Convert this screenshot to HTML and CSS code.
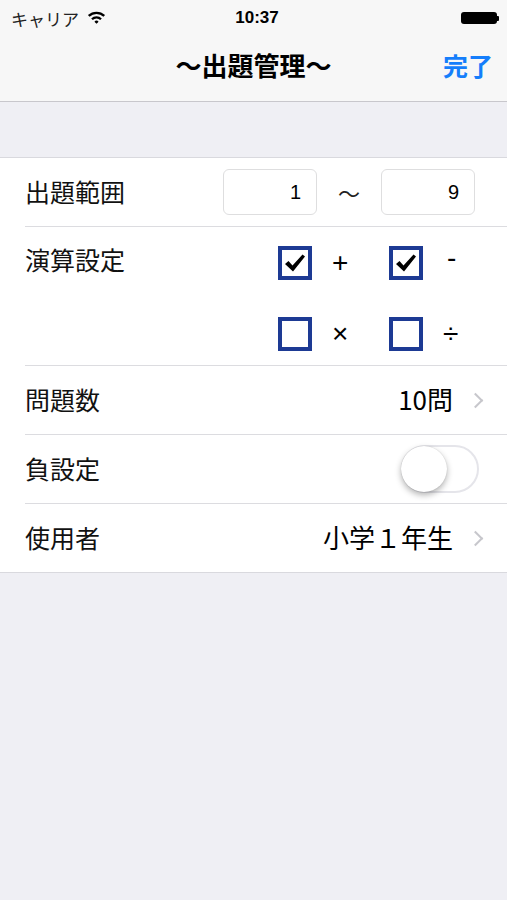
FILE: index.html
```html
<!DOCTYPE html>
<html lang="ja">
<head>
  <meta charset="UTF-8" />
  <title>出題管理</title>
  <link rel="stylesheet" href="styles.css">
</head>
<body>
  <div class="statusbar">
    <div class="carrier">キャリア
      <svg class="wifi" width="19" height="14" viewBox="0 0 20 14">
        <path d="M1 5 A13 13 0 0 1 19 5 L17.3 6.8 A10.6 10.6 0 0 0 2.7 6.8 Z" fill="#000"/>
        <path d="M4.4 8.5 A8 8 0 0 1 15.6 8.5 L13.9 10.2 A5.6 5.6 0 0 0 6.1 10.2 Z" fill="#000"/>
        <path d="M7.8 11.9 A3 3 0 0 1 12.2 11.9 L10 14 Z" fill="#000"/>
      </svg>
    </div>
    <div class="time">10:37</div>
    <div class="battery"><span class="battery-body"></span><span class="battery-tip"></span></div>
  </div>

  <div class="navbar">
    <div class="nav-title">〜出題管理〜</div>
    <div class="nav-done">完了</div>
  </div>

  <div class="spacer"></div>

  <div class="table">
    <div class="row">
      <div class="label">出題範囲</div>
      <div class="range">
        <div class="field">1</div>
        <span class="tilde">〜</span>
        <div class="field">9</div>
      </div>
    </div>

    <div class="row row-ops">
      <div class="label">演算設定</div>
      <div class="ops">
        <div class="op">
          <span class="check">
            <svg width="22" height="20" viewBox="0 0 22 20"><path d="M1 11 L4.5 8 L8.5 12.5 L18.5 1.5 L21 3.5 L9 18.5 Z" fill="#000"/></svg>
          </span>
          <span class="sign">+</span>
        </div>
        <div class="op">
          <span class="check">
            <svg width="22" height="20" viewBox="0 0 22 20"><path d="M1 11 L4.5 8 L8.5 12.5 L18.5 1.5 L21 3.5 L9 18.5 Z" fill="#000"/></svg>
          </span>
          <span class="sign sign-minus">-</span>
        </div>
        <div class="op"><span class="check"></span><span class="sign">×</span></div>
        <div class="op"><span class="check"></span><span class="sign">÷</span></div>
      </div>
    </div>

    <div class="row">
      <div class="label">問題数</div>
      <div class="value">10問<span class="chevron"></span></div>
    </div>

    <div class="row">
      <div class="label">負設定</div>
      <div class="switch"><span class="knob"></span></div>
    </div>

    <div class="row last">
      <div class="label">使用者</div>
      <div class="value">小学１年生<span class="chevron"></span></div>
    </div>
  </div>
</body>
</html>
```

FILE: styles.css
```css
body {
  margin: 0;
  background: #efeff4;
  font-family: "Noto Sans CJK JP", "Noto Sans", sans-serif;
  color: #000;
  height: 900px;
}
.statusbar {
  background: #f7f7f7;
  height: 36px;
  display: flex;
  align-items: center;
  justify-content: space-between;
  padding: 0 8px 0 11px;
  font-size: 17px;
}
.carrier {
  display: flex;
  align-items: center;
  gap: 8px;
  width: 120px;
  color: #222;
}
.wifi {
  margin-top: -2px;
}
.time {
  font-family: "Liberation Sans", sans-serif;
  font-weight: bold;
  font-size: 17px;
  margin-left: 4px;
}
.battery {
  width: 120px;
  display: flex;
  justify-content: flex-end;
  align-items: center;
}
.battery-body {
  width: 36px;
  height: 12px;
  background: #000;
  border-radius: 3px;
}
.battery-tip {
  width: 2px;
  height: 5px;
  background: #000;
  border-radius: 0 1px 1px 0;
}
.navbar {
  background: #f7f7f7;
  height: 65px;
  border-bottom: 1px solid #c8c7cc;
  display: flex;
  align-items: center;
  justify-content: center;
  position: relative;
}
.nav-title {
  font-size: 26px;
  font-weight: bold;
  margin-top: -8px;
}
.nav-done {
  position: absolute;
  right: 14px;
  top: 11px;
  font-size: 25px;
  font-weight: bold;
  color: #157efb;
}
.spacer {
  height: 55px;
}
.table {
  background: #fff;
  border-top: 1px solid #d9d9de;
  border-bottom: 1px solid #d9d9de;
  padding-left: 25px;
}
.row {
  display: flex;
  justify-content: space-between;
  align-items: center;
  height: 68px;
  border-bottom: 1px solid #dcdce0;
  padding-right: 30px;
}
.row.last {
  border-bottom: none;
}
.label {
  font-size: 25px;
  color: #111;
  margin-top: -3px;
}
.range {
  display: flex;
  align-items: center;
  margin-right: 2px;
}
.field {
  width: 94px;
  height: 46px;
  box-sizing: border-box;
  border: 1px solid #dededf;
  border-radius: 6px;
  font-family: "Liberation Sans", sans-serif;
  font-size: 20px;
  text-align: right;
  padding-right: 15px;
  line-height: 44px;
}
.tilde {
  width: 64px;
  text-align: center;
  font-size: 22px;
  color: #222;
}
.row-ops {
  height: 138px;
  align-items: flex-start;
  padding-right: 0;
}
.row-ops .label {
  margin-top: 14px;
}
.ops {
  display: grid;
  grid-template-columns: 111px 85px;
  row-gap: 37px;
  padding-top: 19px;
  margin-left: auto;
  width: 229px;
}
.op {
  display: flex;
  align-items: center;
  gap: 20px;
}
.check {
  width: 34px;
  height: 34px;
  box-sizing: border-box;
  border: 4px solid #1d3a94;
  display: flex;
  align-items: center;
  justify-content: center;
}
.sign {
  font-family: "Liberation Sans", sans-serif;
  font-size: 28px;
  line-height: 1;
}
.sign-minus {
  margin-top: -10px;
  margin-left: 4px;
}
.value {
  font-size: 26px;
  display: flex;
  align-items: center;
  margin-right: -4px;
  margin-top: -3px;
}
.chevron {
  width: 9px;
  height: 9px;
  border-top: 2px solid #c7c7cc;
  border-right: 2px solid #c7c7cc;
  transform: rotate(45deg);
  margin-left: 17px;
  margin-top: 3px;
}
.switch {
  width: 78px;
  height: 48px;
  box-sizing: border-box;
  border: 2px solid #e5e5ea;
  border-radius: 24px;
  position: relative;
  margin-right: -2px;
}
.knob {
  position: absolute;
  left: -2px;
  top: -1px;
  width: 46px;
  height: 46px;
  border-radius: 50%;
  background: #fff;
  box-shadow: 0 3px 6px rgba(0,0,0,0.3), 0 0 1px rgba(0,0,0,0.2);
}
```
